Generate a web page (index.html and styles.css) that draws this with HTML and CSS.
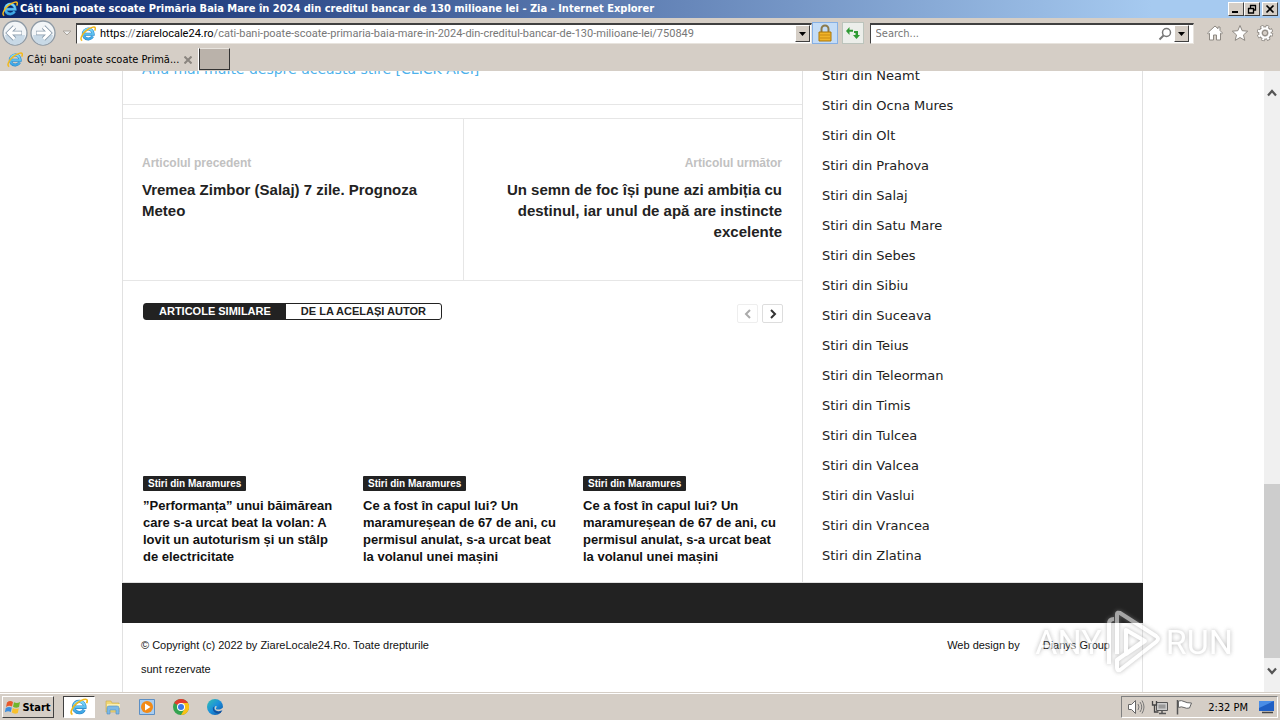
FILE: index.html
```html
<!DOCTYPE html>
<html lang="ro">
<head>
<meta charset="utf-8">
<title>Câți bani poate scoate Primăria Baia Mare în 2024 din creditul bancar de 130 milioane lei - Zia</title>
<link rel="stylesheet" href="styles.css">
</head>
<body>
<svg class="defs" aria-hidden="true">
  <defs>
    <linearGradient id="blue" x1="0" y1="0" x2="0" y2="1"><stop offset="0" stop-color="#7fdcfc"/><stop offset="1" stop-color="#3aa4e4"/></linearGradient>
    <linearGradient id="edgeG" x1="0" y1="0" x2="1" y2="1"><stop offset="0" stop-color="#35c1b0"/><stop offset=".5" stop-color="#1b8fdc"/><stop offset="1" stop-color="#0c50a0"/></linearGradient>
    <symbol id="ie" viewBox="0 0 16 16">
      <path d="M12.6 10.4a5 5 0 1 1 .6-2.2H4.4" fill="none" stroke="#2b86c8" stroke-width="3"/>
      <path d="M12.6 10.4a5 5 0 1 1 .6-2.2H4.4" fill="none" stroke="url(#blue)" stroke-width="2"/>
      <path d="M2.2 14.6C-.6 13.4 2 8 6.200 4.600S14.800.2 15.300 2c.2.700-.1 1.600-.6 2.600" fill="none" stroke="#f3b91c" stroke-width="1.500"/>
    </symbol>
    <symbol id="back" viewBox="0 0 26 26">
      <circle cx="13" cy="13" r="12" fill="#f2f5f7" stroke="#8e9aa5" stroke-width="1.300"/>
      <path d="M3 15a10 10 0 0 0 20 0z" fill="#c8d9e6"/>
      <path d="M12.500 7 6.500 13l6 6M7 13h13" fill="none" stroke="#8b9cac" stroke-width="4.600"/>
      <path d="M12.500 7 6.500 13l6 6M7 13h12.500" fill="none" stroke="#fff" stroke-width="3"/>
    </symbol>
  </defs>
</svg>

<header class="chrome">
  <div class="titlebar">
    <svg class="icon16"><use href="#ie"/></svg>
    <span class="titletext">Câți bani poate scoate Primăria Baia Mare în 2024 din creditul bancar de 130 milioane lei - Zia - Internet Explorer</span>
    <div class="winbtns">
      <button aria-label="Minimize"><svg viewBox="0 0 12 10"><path d="M2 8h6" stroke="#000" stroke-width="2"/></svg></button>
      <button aria-label="Restore"><svg viewBox="0 0 12 10"><path d="M4 1.500h6M4.500 1v3M9.500 1v5H8M2 4.500h6M2.500 4v5h5V4" fill="none" stroke="#000" stroke-width="1.300"/></svg></button>
      <button class="close" aria-label="Close"><svg viewBox="0 0 12 10"><path d="m2.500 1.500 7 7m0-7-7 7" stroke="#000" stroke-width="1.700"/></svg></button>
    </div>
  </div>

  <div class="toolbar">
    <div class="navbtns">
      <button aria-label="Back"><svg><use href="#back"/></svg></button>
      <button class="forward" aria-label="Forward"><svg><use href="#back"/></svg></button>
      <span class="recent"><svg viewBox="0 0 10 6"><path d="M1 1h8L5 5z" fill="#eee" stroke="#aaa59e"/></svg></span>
    </div>
    <div class="field address">
      <svg class="icon16"><use href="#ie"/></svg>
      <div class="url" role="textbox" aria-label="Address"><b>https</b>://<b>ziarelocale24.ro</b>/cati-bani-poate-scoate-primaria-baia-mare-in-2024-din-creditul-bancar-de-130-milioane-lei/750849</div>
      <button class="drop" aria-label="Show address list"><svg viewBox="0 0 7 4"><path d="M0 0h7L3.500 4z"/></svg></button>
    </div>
    <button class="tool lock" aria-label="Security report"><svg viewBox="0 0 16 18"><path d="M4.500 9V5a3.500 3.500 0 0 1 7 0v4" fill="none" stroke="#8c7a4a" stroke-width="2"/><path d="M2 8h12v9H2z" fill="#f0b429" stroke="#a97408"/><path d="M3 11h10M3 14h10" stroke="#c98a12"/></svg></button>
    <button class="tool" aria-label="Refresh"><svg viewBox="0 0 16 18"><path d="M1 7l3.500-4v2.700H8v2H4.500V11zM15 11l-3.500 4-3.500-4h2.500V9H9V7h4v4z" fill="#2f9a33"/></svg></button>
    <div class="field search">
      <input type="text" placeholder="Search..." aria-label="Search">
      <button class="plain" aria-label="Go"><svg viewBox="0 0 14 14"><circle cx="8.500" cy="5.500" r="4" fill="none" stroke="#777" stroke-width="1.500"/><path d="M5.500 8.500 1.500 12.500" stroke="#777" stroke-width="2"/></svg></button>
      <button class="drop" aria-label="Search options"><svg viewBox="0 0 7 4"><path d="M0 0h7L3.500 4z"/></svg></button>
    </div>
    <div class="commands">
      <button class="plain" aria-label="Home"><svg viewBox="0 0 18 18"><path d="M1.500 9 9 2l3 2.700V3h2v3.500L16.500 9l-1 1-1-.8V16H10.500v-5h-3v5H3.500V9.200l-1 .8z" fill="#fff" stroke="#8e8983"/></svg></button>
      <button class="plain" aria-label="Favorites"><svg viewBox="0 0 18 18"><path d="m9 1.500 2.200 5.200 5.500.5-4.200 3.700 1.300 5.500L9 13.500l-4.800 2.900 1.300-5.500L1.300 7.200l5.500-.5z" fill="#fff" stroke="#8e8983"/></svg></button>
      <button class="plain" aria-label="Tools"><svg viewBox="0 0 18 18"><circle cx="9" cy="9" r="6.500" fill="none" stroke="#8e8983" stroke-width="3.400" stroke-dasharray="3 2.100"/><circle cx="9" cy="9" r="4.800" fill="none" stroke="#8e8983" stroke-width="4"/><circle cx="9" cy="9" r="6.300" fill="none" stroke="#fff" stroke-width="2.200" stroke-dasharray="2 2.950" stroke-dashoffset="-.5"/><circle cx="9" cy="9" r="4.600" fill="none" stroke="#fff" stroke-width="2.400"/><circle cx="9" cy="9" r="2.600" fill="#d5cec6" stroke="#8e8983"/></svg></button>
    </div>
  </div>

  <div class="tabs">
    <div class="tab">
      <svg class="icon16"><use href="#ie"/></svg>
      <span>Câți bani poate scoate Primă...</span>
      <button class="plain" aria-label="Close tab"><svg viewBox="0 0 8 8"><path d="m.5.500 7 7m0-7-7 7" stroke="#8a857f" stroke-width="2"/></svg></button>
    </div>
    <button class="newtab" aria-label="New tab"></button>
  </div>
</header>

<div class="viewport">
  <div class="scrolled">
    <div class="page">
      <div class="columns">
        <main>
          <p class="more"><a href="#">Afla mai multe despre aceasta stire [CLICK AICI]</a></p>
          <nav class="siblings">
            <div><span>Articolul precedent</span><a href="#">Vremea Zimbor (Salaj) 7 zile. Prognoza Meteo</a></div>
            <div class="next"><span>Articolul următor</span><a href="#">Un semn de foc își pune azi ambiția cu destinul, iar unul de apă are instincte excelente</a></div>
          </nav>
          <section class="related">
            <div class="relhead">
              <div class="switch"><button class="on">ARTICOLE SIMILARE</button><button>DE LA ACELAȘI AUTOR</button></div>
              <div class="pager">
                <button class="off" aria-label="Previous"><svg viewBox="0 0 8 10"><path d="M6 1 2 5l4 4" fill="none" stroke="currentColor" stroke-width="2"/></svg></button>
                <button aria-label="Next"><svg viewBox="0 0 8 10"><path d="m2 1 4 4-4 4" fill="none" stroke="currentColor" stroke-width="2"/></svg></button>
              </div>
            </div>
            <div class="cards">
              <article><div class="thumb"><a class="badge" href="#">Stiri din Maramures</a></div><h3><a href="#">”Performanța” unui băimărean care s-a urcat beat la volan: A lovit un autoturism și un stâlp de electricitate</a></h3></article>
              <article><div class="thumb"><a class="badge" href="#">Stiri din Maramures</a></div><h3><a href="#">Ce a fost în capul lui? Un maramureșean de 67 de ani, cu permisul anulat, s-a urcat beat la volanul unei mașini</a></h3></article>
              <article><div class="thumb"><a class="badge" href="#">Stiri din Maramures</a></div><h3><a href="#">Ce a fost în capul lui? Un maramureșean de 67 de ani, cu permisul anulat, s-a urcat beat la volanul unei mașini</a></h3></article>
            </div>
          </section>
        </main>
        <aside>
          <ul>
            <li><a href="#">Stiri din Neamt</a></li>
            <li><a href="#">Stiri din Ocna Mures</a></li>
            <li><a href="#">Stiri din Olt</a></li>
            <li><a href="#">Stiri din Prahova</a></li>
            <li><a href="#">Stiri din Salaj</a></li>
            <li><a href="#">Stiri din Satu Mare</a></li>
            <li><a href="#">Stiri din Sebes</a></li>
            <li><a href="#">Stiri din Sibiu</a></li>
            <li><a href="#">Stiri din Suceava</a></li>
            <li><a href="#">Stiri din Teius</a></li>
            <li><a href="#">Stiri din Teleorman</a></li>
            <li><a href="#">Stiri din Timis</a></li>
            <li><a href="#">Stiri din Tulcea</a></li>
            <li><a href="#">Stiri din Valcea</a></li>
            <li><a href="#">Stiri din Vaslui</a></li>
            <li><a href="#">Stiri din Vrancea</a></li>
            <li><a href="#">Stiri din Zlatina</a></li>
          </ul>
        </aside>
      </div>
      <div class="band"></div>
      <footer>
        <p>© Copyright (c) 2022 by ZiareLocale24.Ro. Toate drepturile sunt rezervate</p>
        <div class="credits"><span>Web design by</span><a href="#">Dianys Group</a></div>
      </footer>
    </div>
  </div>
  <div class="scrollbar">
    <button class="up" aria-label="Scroll up"><svg viewBox="0 0 10 8"><path d="m1 6.500 4-4.500 4 4.500" fill="none" stroke="#555" stroke-width="2.200"/></svg></button>
    <div class="track"><div class="handle"></div></div>
    <button class="down" aria-label="Scroll down"><svg viewBox="0 0 10 8"><path d="m1 1.500 4 4.500 4-4.500" fill="none" stroke="#555" stroke-width="2.200"/></svg></button>
  </div>
  <div class="watermark">
    <span>ANY</span>
    <svg viewBox="0 0 58 64"><path d="M12 8v36M4 54V14q0-5 5-5M12 44V4q0-2 3-1l36 23q4 3 0 6L15 60q-3 1-3-2v-8l28-20M21 20v24l19-13z" fill="none" stroke="#fff" stroke-width="4" stroke-linejoin="round"/></svg>
    <span>RUN</span>
  </div>
</div>

<div class="taskbar">
  <button class="start"><svg viewBox="0 0 16 16"><path d="M2 3.500Q5 1 8 3L7 7.500Q4 6 1 8z" fill="#e8582a"/><path d="M9 3.300q3 1.500 6-.3L14 8q-3 1.500-6-.3z" fill="#6fb52c"/><path d="M.8 9q3-2 6-.4L5.800 13q-3-1.500-6 .5z" fill="#3d8ede"/><path d="M7.800 9q3 1.600 6 .2L12.800 14q-3 1.500-6-.4z" fill="#f8c02c"/></svg>Start</button>
  <div class="apps">
    <button class="active" aria-label="Internet Explorer"><svg><use href="#ie"/></svg></button>
    <button aria-label="Explorer"><svg viewBox="0 0 16 16"><path d="M1 2h5l1 2h7v9H1z" fill="#f0d774" stroke="#c9a94a" stroke-width=".6"/><path d="M2 5h13v4H2z" fill="#fbeeb0"/><path d="M2 9q0-2 2-2h8q2 0 2 2v6h-3v-4H5v4H2z" fill="#7db9e6" stroke="#4f8fc4" stroke-width=".6"/></svg></button>
    <button aria-label="Media Player"><svg viewBox="0 0 16 16"><path d="M.5.500h15v15H.5z" fill="#a9cdf0" stroke="#5c8fc4"/><circle cx="8" cy="8" r="6" fill="#f28a16"/><path d="M6 4.500v7L11.500 8z" fill="#fff"/></svg></button>
    <button aria-label="Chrome"><svg viewBox="0 0 16 16"><circle cx="8" cy="8" r="8" fill="#34a350"/><path d="M8 8 1.100 4A8 8 0 0 1 15 4z" fill="#e23b2e"/><path d="M8 4h7a8 8 0 0 1-7 12l3.500-6z" fill="#fbc116"/><circle cx="8" cy="8" r="4" fill="#fff"/><circle cx="8" cy="8" r="3" fill="#3b78e7"/></svg></button>
    <button aria-label="Edge"><svg viewBox="0 0 16 16"><circle cx="8" cy="8" r="8" fill="url(#edgeG)"/><path d="M8.500 6.500c-2 1-2.500 4 .5 5.500 2 1 4.500.7 6-.5l-1.500 2.500C9 15.500 5 12 6 8.500z" fill="#124f9c"/><path d="M9.500 7c.5 1.500-1 2-.5 3 .8 1 4.500 1 7-1.500V11q-4 2-7 .5-2.500-2-.5-4.500z" fill="#d5cec6"/></svg></button>
  </div>
  <div class="tray">
    <svg viewBox="0 0 18 16"><path d="M1.500 5.500h3l4-4v13l-4-4h-3z" fill="#fff" stroke="#666"/><path d="M11 5q2 3 0 6M13 3q3.500 5 0 10M15 1.500q4 6.500 0 13" fill="none" stroke="#777"/></svg>
    <svg viewBox="0 0 18 16"><path d="M5.500 3.500h11v8h-11z" fill="#ccc" stroke="#555"/><path d="M7.500 5.500h7v4h-7z" fill="#999"/><path d="M8 14.500h7M11 12v2" stroke="#555" stroke-width="1.500"/><path d="M1.500 2v4h4V2M3.500 6v7h4" fill="none" stroke="#444" stroke-width="1.300"/></svg>
    <svg viewBox="0 0 18 16"><path d="M2.500 1v14.500" stroke="#555" stroke-width="1.500"/><path d="M3.500 2q3-1 5.500.5T16.500 4l-2 5q-3 .8-5.500-.5t-5.500 0z" fill="#fff" stroke="#666"/></svg>
    <time>2:32 PM</time>
    <svg viewBox="0 0 18 16"><path d="M1 2h15v10H1z" fill="#1f5fc4"/><path d="M1 2h15L1 9z" fill="#4a8de6"/><path d="M4 13.500h11" stroke="#444" stroke-width="1.500"/></svg>
  </div>
</div>
</body>
</html>
```
FILE: styles.css
```css
* { box-sizing: border-box; }
body {
  margin: 0;
  height: 100vh;
  display: flex;
  flex-direction: column;
  overflow: hidden;
  background: #fff;
  color: #222;
  font-family: "DejaVu Sans Condensed", "DejaVu Sans", sans-serif;
  font-size: 11px;
}
a { color: inherit; text-decoration: none; }
p, h3, ul { margin: 0; padding: 0; }
button { font: inherit; color: inherit; padding: 0; border: 0; background: none; display: flex; align-items: center; justify-content: center; flex: none; }
svg { display: block; flex: none; }
.defs { position: absolute; width: 0; height: 0; }
.icon16 { width: 16px; height: 16px; }

.chrome { background: #d5cec6; color: #000; }
.titlebar {
  display: flex;
  align-items: center;
  gap: 2px;
  height: 18px;
  padding: 0 2px;
  background: linear-gradient(90deg, #0a246a, #a6caf0 90%);
  color: #fff;
}
.titletext { flex: 1; min-width: 0; overflow: hidden; white-space: nowrap; font-weight: bold; font-size: 11px; line-height: 18px; }
.winbtns { display: flex; }
.winbtns button, .drop, .start {
  background: #d5cec6;
  border: 1px solid;
  border-color: #fff #404040 #404040 #fff;
}
.winbtns button { width: 16px; height: 14px; }
.winbtns svg { width: 12px; height: 10px; }
.winbtns .close { margin-left: 2px; }

.toolbar { display: flex; align-items: center; height: 30px; padding: 0 6px 0 2px; }
.navbtns { display: flex; align-items: center; width: 74px; gap: 2px; }
.navbtns button, .navbtns button svg { width: 26px; height: 26px; }
.forward svg { transform: scaleX(-1); }
.recent { padding-left: 4px; }
.recent svg { width: 10px; height: 6px; }
.field {
  display: flex;
  align-items: center;
  height: 21px;
  background: #fff;
  border: 1px solid;
  border-color: #404040 #e8e4de #e8e4de #404040;
  border-top-width: 2px;
}
.address { flex: 741; min-width: 0; padding-left: 3px; gap: 4px; }
.url { flex: 1; min-width: 0; overflow: hidden; white-space: nowrap; color: #777; font: 11px/18px Roboto, sans-serif; }
.url b { color: #000; font-weight: normal; }
.drop { width: 15px; height: 17px; margin-right: 1px; }
.drop svg { width: 7px; height: 4px; }
.tool { width: 22px; height: 22px; margin-left: 4px; border: 1px solid #bcc4bc; background: #eceeea; }
.tool svg { width: 16px; height: 18px; }
.tool.lock { width: 26px; margin-left: 0; background: #c4dcf6; border-color: #86b0e4; }
.search { flex: 319; min-width: 0; margin-left: 6px; padding: 0 3px 0 5px; gap: 2px; }
.search input { flex: 1; min-width: 0; border: 0; padding: 0; background: none; font: inherit; outline: 0; }
.search input::placeholder { color: #777; opacity: 1; }
.search .plain svg { width: 14px; height: 14px; }
.commands { display: flex; gap: 7px; padding-left: 12px; }
.commands svg { width: 18px; height: 18px; }

.tabs { display: flex; height: 23px; }
.tab { display: flex; align-items: center; width: 199px; padding: 0 6px 0 7px; gap: 4px; border-right: 1px solid #fff; }
.tab span { flex: 1; min-width: 0; white-space: nowrap; }
.tab .plain svg { width: 8px; height: 8px; }
.newtab { width: 31px; height: 22px; background: #bab2aa; border: 1px solid #333; border-top-color: #e8e4de; }

.viewport { position: relative; flex: 1; min-height: 0; display: flex; }
.scrolled {
  flex: 1;
  min-width: 0;
  overflow: hidden;
  display: flex;
  flex-direction: column;
  justify-content: flex-end;
  align-items: center;
  padding-left: 1px;
}
.page { width: 100%; max-width: 1021px; flex: none; border: solid #e1e1e1; border-width: 0 1px; font-family: "Liberation Sans", Arial, sans-serif; }
.columns { display: grid; grid-template-columns: 1fr 339px; border-bottom: 1px solid #e1e1e1; }
main { border-right: 1px solid #e1e1e1; }
.more {
  padding: 0 19px 23px;
  font: 14px/24px "DejaVu Sans", Verdana, sans-serif;
  color: #4db2ec;
  border-bottom: 1px solid #e6e6e6;
  white-space: nowrap;
}
.siblings {
  display: grid;
  grid-template-columns: 1fr 1fr;
  margin-top: 13px;
  border: solid #e6e6e6;
  border-width: 1px 0;
}
.siblings div { padding: 34px 20px 38px 19px; display: flex; flex-direction: column; gap: 6px; }
.siblings div.next { text-align: right; border-left: 1px solid #e6e6e6; }
.siblings span { font: bold 12px/20px "Liberation Sans", Arial, sans-serif; color: #c1c1c1; }
.siblings a { font-weight: bold; font-size: 15px; line-height: 21px; }
.related { padding: 22px 19px 17px 20px; }
.relhead { display: flex; justify-content: space-between; height: 20px; }
.switch { display: flex; height: 17px; border: 1px solid #222; border-radius: 3px; background: #fff; font-weight: bold; font-size: 11px; line-height: 15px; }
.switch button { padding: 0 15px; }
.switch .on { background: #222; color: #fff; }
.pager { display: flex; gap: 4px; padding-top: 1px; }
.pager button { width: 21px; height: 19px; border: 1px solid #ddd; border-radius: 2px; color: #333; }
.pager .off { border-color: #eee; color: #aaa; }
.pager svg { width: 8px; height: 10px; }
.cards { display: grid; grid-template-columns: repeat(3, 1fr); gap: 20px; padding-top: 17px; }
.thumb { height: 151px; display: flex; align-items: flex-end; }
.badge { background: #222; color: #fff; font-weight: bold; font-size: 10px; line-height: 15px; padding: 0 5px; border-radius: 1px; }
.cards h3 { font-size: 13px; line-height: 17px; padding-top: 6px; color: #111; }
aside { padding: 4px 19px 11px; }
aside ul { list-style: none; font: 13px/30px "DejaVu Sans", Verdana, sans-serif; }
.band { height: 40px; margin: 0 -1px; background: #222; }
footer { display: flex; justify-content: space-between; padding: 10px 32px 11px 18px; font-size: 11px; line-height: 24px; color: #111; }
footer p { width: 300px; }
.credits { display: flex; gap: 23px; }

.scrollbar { width: 16px; background: #f0f0f0; display: flex; flex-direction: column; }
.scrollbar button { width: 16px; }
.scrollbar .up { height: 44px; }
.scrollbar .down { height: 34px; padding-bottom: 8px; }
.scrollbar svg { width: 10px; height: 8px; }
.track { flex: 1; display: flex; flex-direction: column; justify-content: flex-end; }
.handle { height: 32%; background: #cdcdcd; }

.watermark {
  position: absolute;
  right: 47px;
  bottom: 18px;
  display: flex;
  align-items: center;
  gap: 3px;
  color: #fff;
  opacity: .6;
  font: 34px/64px "Liberation Sans Narrow", Roboto, sans-serif;
  filter: drop-shadow(0 0 2px #888);
  pointer-events: none;
}
.watermark svg { width: 58px; height: 64px; }

.taskbar {
  display: flex;
  align-items: center;
  height: 28px;
  padding: 1px 2px 0;
  background: #d5cec6;
  border-top: 1px solid #d5cec6;
  box-shadow: inset 0 1px #fff;
  color: #000;
}
.start { width: 52px; height: 22px; gap: 1px; font-weight: bold; font-size: 11px; }
.start svg { width: 16px; height: 16px; }
.apps { display: flex; flex: 1; padding-left: 9px; gap: 2px; }
.apps button { width: 32px; height: 22px; }
.apps svg { width: 16px; height: 16px; }
.apps .active { background: #fff; border: 1px solid; border-color: #404040 #fff #fff #404040; }
.apps .active svg { width: 18px; height: 18px; }
.tray { display: flex; align-items: center; gap: 6px; height: 22px; padding: 0 1px 0 5px; border: 1px solid; border-color: #808080 #fff #fff #808080; }
.tray svg { width: 18px; height: 16px; }
.tray time { padding: 0 4px 0 9px; }
```
